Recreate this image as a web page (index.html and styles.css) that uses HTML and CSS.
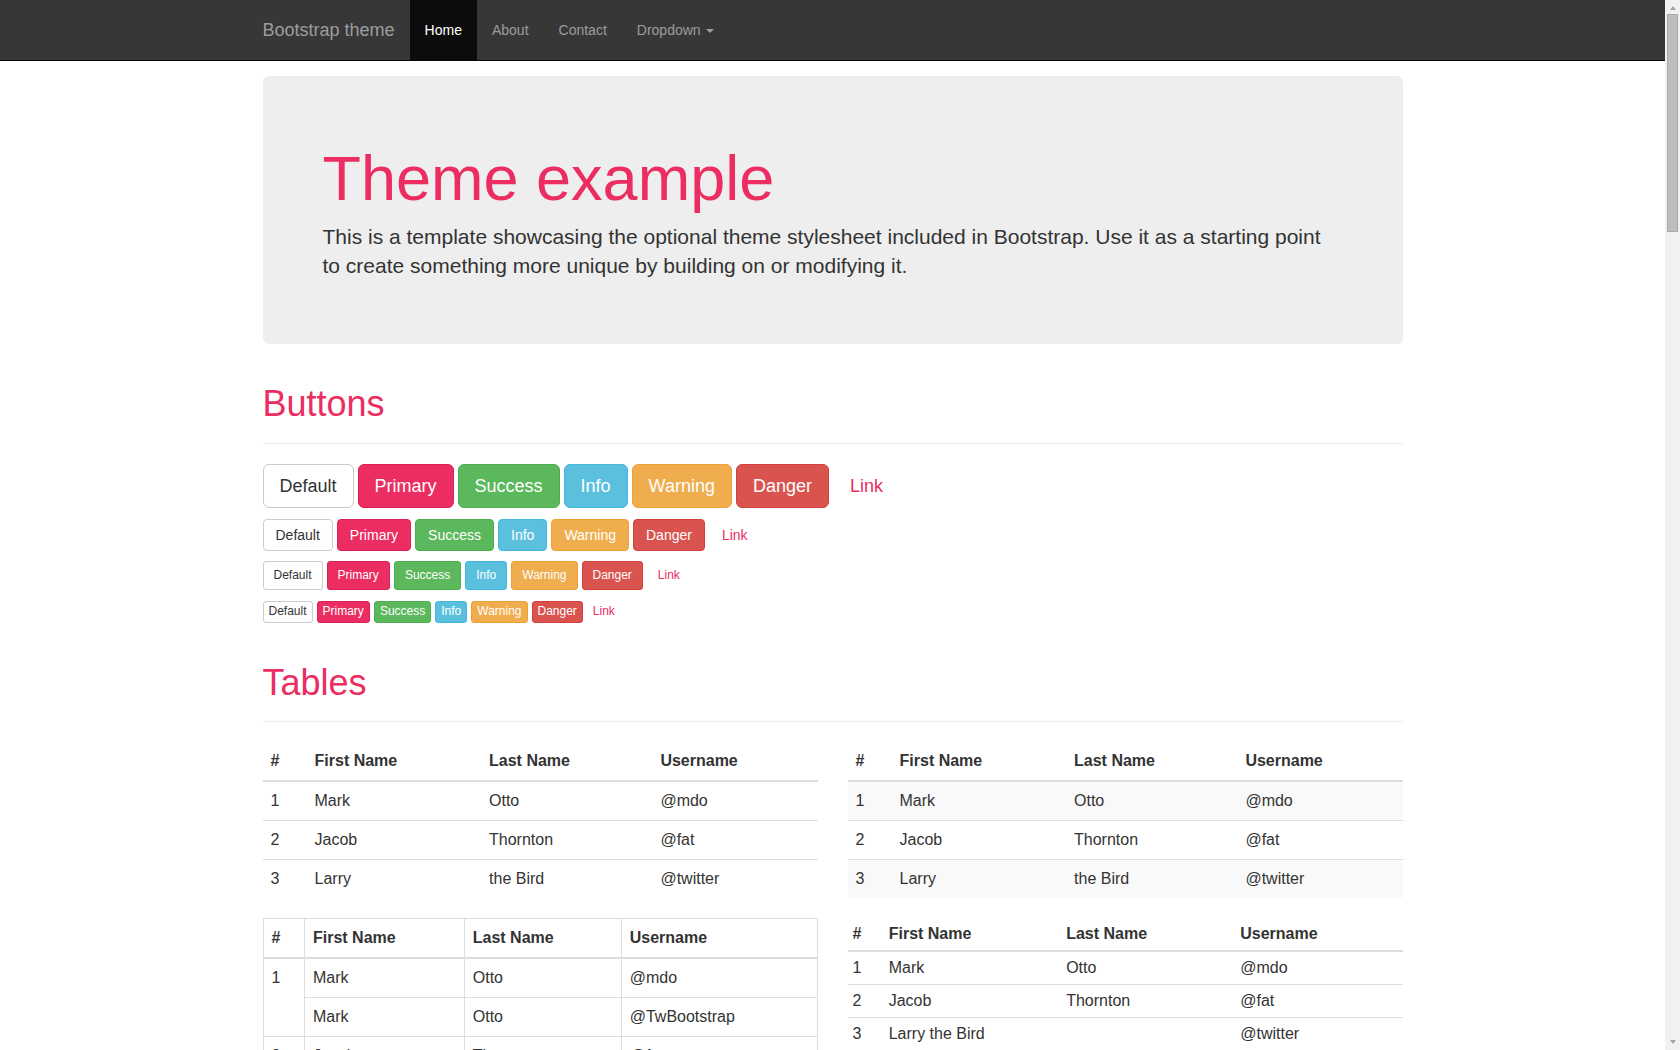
FILE: index.html
```html
<!DOCTYPE html>
<html lang="en">
<head>
<meta charset="utf-8">
<title>Theme Template for Bootstrap</title>
<link rel="stylesheet" href="styles.css">
</head>
<body>
<div class="page">
<nav class="navbar">
  <div class="container navbar-inner">
    <a class="brand" href="#">Bootstrap theme</a>
    <ul class="nav">
      <li><a class="active" href="#">Home</a></li>
      <li><a href="#about">About</a></li>
      <li><a href="#contact">Contact</a></li>
      <li><a href="#">Dropdown <span class="caret"></span></a></li>
    </ul>
  </div>
</nav>

<main class="container showcase">
  <div class="jumbotron">
    <h1>Theme example</h1>
    <p>This is a template showcasing the optional theme stylesheet included in Bootstrap. Use it as a starting point to create something more unique by building on or modifying it.</p>
  </div>

  <div class="page-header"><h1>Buttons</h1></div>
  <div class="btn-row row-lg">
    <button type="button" class="btn btn-lg btn-default">Default</button>
    <button type="button" class="btn btn-lg btn-primary">Primary</button>
    <button type="button" class="btn btn-lg btn-success">Success</button>
    <button type="button" class="btn btn-lg btn-info">Info</button>
    <button type="button" class="btn btn-lg btn-warning">Warning</button>
    <button type="button" class="btn btn-lg btn-danger">Danger</button>
    <button type="button" class="btn btn-lg btn-link">Link</button>
  </div>
  <div class="btn-row row-md">
    <button type="button" class="btn btn-default">Default</button>
    <button type="button" class="btn btn-primary">Primary</button>
    <button type="button" class="btn btn-success">Success</button>
    <button type="button" class="btn btn-info">Info</button>
    <button type="button" class="btn btn-warning">Warning</button>
    <button type="button" class="btn btn-danger">Danger</button>
    <button type="button" class="btn btn-link">Link</button>
  </div>
  <div class="btn-row row-sm">
    <button type="button" class="btn btn-sm btn-default">Default</button>
    <button type="button" class="btn btn-sm btn-primary">Primary</button>
    <button type="button" class="btn btn-sm btn-success">Success</button>
    <button type="button" class="btn btn-sm btn-info">Info</button>
    <button type="button" class="btn btn-sm btn-warning">Warning</button>
    <button type="button" class="btn btn-sm btn-danger">Danger</button>
    <button type="button" class="btn btn-sm btn-link">Link</button>
  </div>
  <div class="btn-row row-xs">
    <button type="button" class="btn btn-xs btn-default">Default</button>
    <button type="button" class="btn btn-xs btn-primary">Primary</button>
    <button type="button" class="btn btn-xs btn-success">Success</button>
    <button type="button" class="btn btn-xs btn-info">Info</button>
    <button type="button" class="btn btn-xs btn-warning">Warning</button>
    <button type="button" class="btn btn-xs btn-danger">Danger</button>
    <button type="button" class="btn btn-xs btn-link">Link</button>
  </div>

  <div class="page-header"><h1>Tables</h1></div>
  <div class="table-grid">
    <table class="table">
      <thead><tr><th>#</th><th>First Name</th><th>Last Name</th><th>Username</th></tr></thead>
      <tbody>
        <tr><td>1</td><td>Mark</td><td>Otto</td><td>@mdo</td></tr>
        <tr><td>2</td><td>Jacob</td><td>Thornton</td><td>@fat</td></tr>
        <tr><td>3</td><td>Larry</td><td>the Bird</td><td>@twitter</td></tr>
      </tbody>
    </table>
    <table class="table table-striped">
      <thead><tr><th>#</th><th>First Name</th><th>Last Name</th><th>Username</th></tr></thead>
      <tbody>
        <tr><td>1</td><td>Mark</td><td>Otto</td><td>@mdo</td></tr>
        <tr><td>2</td><td>Jacob</td><td>Thornton</td><td>@fat</td></tr>
        <tr><td>3</td><td>Larry</td><td>the Bird</td><td>@twitter</td></tr>
      </tbody>
    </table>
  </div>
  <div class="table-grid">
    <table class="table table-bordered">
      <thead><tr><th>#</th><th>First Name</th><th>Last Name</th><th>Username</th></tr></thead>
      <tbody>
        <tr><td rowspan="2">1</td><td>Mark</td><td>Otto</td><td>@mdo</td></tr>
        <tr><td>Mark</td><td>Otto</td><td>@TwBootstrap</td></tr>
        <tr><td>2</td><td>Jacob</td><td>Thornton</td><td>@fat</td></tr>
        <tr><td>3</td><td colspan="2">Larry the Bird</td><td>@twitter</td></tr>
      </tbody>
    </table>
    <table class="table table-condensed">
      <thead><tr><th>#</th><th>First Name</th><th>Last Name</th><th>Username</th></tr></thead>
      <tbody>
        <tr><td>1</td><td>Mark</td><td>Otto</td><td>@mdo</td></tr>
        <tr><td>2</td><td>Jacob</td><td>Thornton</td><td>@fat</td></tr>
        <tr><td>3</td><td colspan="2">Larry the Bird</td><td>@twitter</td></tr>
      </tbody>
    </table>
  </div>

  <div class="page-header"><h1>Thumbnails</h1></div>
  <div class="thumbnail"><div class="thumb-img">200x200</div></div>

  <div class="page-header"><h1>Labels</h1></div>
  <h1 class="h-demo h-1">Example heading <span class="label label-default">New</span></h1>
  <h2 class="h-demo h-2">Example heading <span class="label label-default">New</span></h2>
  <h3 class="h-demo h-3">Example heading <span class="label label-default">New</span></h3>
  <h4 class="h-demo h-4">Example heading <span class="label label-default">New</span></h4>
  <h5 class="h-demo h-5">Example heading <span class="label label-default">New</span></h5>
  <h6 class="h-demo h-6">Example heading <span class="label label-default">New</span></h6>
  <p class="label-line">
    <span class="label label-default">Default</span>
    <span class="label label-primary">Primary</span>
    <span class="label label-success">Success</span>
    <span class="label label-info">Info</span>
    <span class="label label-warning">Warning</span>
    <span class="label label-danger">Danger</span>
  </p>

  <div class="page-header"><h1>Badges</h1></div>
  <p><a href="#">Inbox <span class="badge">42</span></a></p>
  <ul class="pills">
    <li><a class="pill pill-active" href="#">Home <span class="badge badge-light">42</span></a></li>
    <li><a class="pill" href="#">Profile</a></li>
    <li><a class="pill" href="#">Messages <span class="badge">3</span></a></li>
  </ul>

  <div class="page-header"><h1>Dropdown menus</h1></div>
  <ul class="dropdown-menu">
    <li><a href="#">Action</a></li>
    <li><a href="#">Another action</a></li>
    <li><a href="#">Something else here</a></li>
    <li class="divider"></li>
    <li><a href="#">Separated link</a></li>
  </ul>

  <div class="page-header"><h1>Navs</h1></div>
  <ul class="tabs">
    <li><a class="tab tab-active" href="#">Home</a></li>
    <li><a class="tab" href="#">Profile</a></li>
    <li><a class="tab" href="#">Messages</a></li>
  </ul>
  <ul class="pills">
    <li><a class="pill pill-active" href="#">Home</a></li>
    <li><a class="pill" href="#">Profile</a></li>
    <li><a class="pill" href="#">Messages</a></li>
  </ul>

  <div class="page-header"><h1>Navbars</h1></div>
  <div class="demo-navbar demo-navbar-light">
    <span class="demo-brand">Project name</span>
    <a class="demo-link demo-link-active" href="#">Home</a>
    <a class="demo-link" href="#about">About</a>
    <a class="demo-link" href="#contact">Contact</a>
  </div>
  <div class="demo-navbar demo-navbar-dark">
    <span class="demo-brand">Project name</span>
    <a class="demo-link demo-link-active" href="#">Home</a>
    <a class="demo-link" href="#about">About</a>
    <a class="demo-link" href="#contact">Contact</a>
  </div>

  <div class="page-header"><h1>Alerts</h1></div>
  <div class="alert alert-success"><strong>Well done!</strong> You successfully read this important alert message.</div>
  <div class="alert alert-info"><strong>Heads up!</strong> This alert needs your attention, but it's not super important.</div>
  <div class="alert alert-warning"><strong>Warning!</strong> Best check yo self, you're not looking too good.</div>
  <div class="alert alert-danger"><strong>Oh snap!</strong> Change a few things up and try submitting again.</div>

  <div class="page-header"><h1>Progress bars</h1></div>
  <div class="progress"><div class="bar bar-primary" style="width: 60%">60% Complete</div></div>
  <div class="progress"><div class="bar bar-success" style="width: 40%">40% Complete (success)</div></div>
  <div class="progress"><div class="bar bar-info" style="width: 20%">20% Complete</div></div>
  <div class="progress"><div class="bar bar-warning" style="width: 60%">60% Complete (warning)</div></div>
  <div class="progress"><div class="bar bar-danger" style="width: 80%">80% Complete (danger)</div></div>

  <div class="page-header"><h1>List groups</h1></div>
  <div class="three-cols">
    <ul class="list-group">
      <li>Cras justo odio</li><li>Dapibus ac facilisis in</li><li>Morbi leo risus</li><li>Porta ac consectetur ac</li><li>Vestibulum at eros</li>
    </ul>
    <ul class="list-group">
      <li class="list-active">Cras justo odio</li><li>Dapibus ac facilisis in</li><li>Morbi leo risus</li><li>Porta ac consectetur ac</li><li>Vestibulum at eros</li>
    </ul>
    <ul class="list-group">
      <li class="list-active"><strong>List group item heading</strong><br>Donec id elit non mi porta gravida at eget metus. Maecenas sed diam eget risus varius blandit.</li>
      <li><strong>List group item heading</strong><br>Donec id elit non mi porta gravida at eget metus. Maecenas sed diam eget risus varius blandit.</li>
    </ul>
  </div>

  <div class="page-header"><h1>Panels</h1></div>
  <div class="three-cols">
    <div>
      <div class="panel"><div class="panel-heading">Panel title</div><div class="panel-body">Panel content</div></div>
      <div class="panel panel-primary"><div class="panel-heading">Panel title</div><div class="panel-body">Panel content</div></div>
    </div>
    <div>
      <div class="panel panel-success"><div class="panel-heading">Panel title</div><div class="panel-body">Panel content</div></div>
      <div class="panel panel-info"><div class="panel-heading">Panel title</div><div class="panel-body">Panel content</div></div>
    </div>
    <div>
      <div class="panel panel-warning"><div class="panel-heading">Panel title</div><div class="panel-body">Panel content</div></div>
      <div class="panel panel-danger"><div class="panel-heading">Panel title</div><div class="panel-body">Panel content</div></div>
    </div>
  </div>

  <div class="page-header"><h1>Wells</h1></div>
  <div class="well">
    <p>Sed ut perspiciatis unde omnis iste natus error sit voluptatem accusantium doloremque laudantium, totam rem aperiam, eaque ipsa quae ab illo inventore veritatis et quasi architecto beatae vitae dicta sunt explicabo.</p>
  </div>
</main>
</div>

<aside class="scrollbar" aria-hidden="true">
  <span class="sb-arrow sb-up"></span>
  <span class="sb-thumb"></span>
  <span class="sb-arrow sb-down"></span>
</aside>
</body>
</html>
```

FILE: styles.css
```css
* {
  box-sizing: border-box;
}

html {
  font-size: 16px;
}

body {
  margin: 0;
  display: flex;
  align-items: flex-start;
  font-family: "Liberation Sans", Arial, sans-serif;
  font-size: 16px;
  line-height: 1.375;
  color: #333;
  background: #fff;
}

a {
  color: #eb2d61;
  text-decoration: none;
}

.page {
  flex: 1 1 auto;
  min-width: 0;
}

/* Window scrollbar */
.scrollbar {
  flex: 0 0 15px;
  position: sticky;
  top: 0;
  height: 100vh;
  display: flex;
  flex-direction: column;
  align-items: center;
  padding: 6px 0;
  background: #f1f1f1;
}

.sb-arrow {
  width: 0;
  height: 0;
  border-left: 3.5px solid transparent;
  border-right: 3.5px solid transparent;
}

.sb-up {
  border-bottom: 4px solid #a3a3a3;
}

.sb-down {
  margin-top: auto;
  border-top: 4px solid #a3a3a3;
}

.sb-thumb {
  width: 11px;
  height: 218px;
  margin-top: 4px;
  background: #bdbdbd;
  border: 1px solid #a9a9a9;
}

.container {
  width: 1170px;
  margin: 0 auto;
  padding: 0 15px;
}

/* Navbar */
.navbar {
  background: #373737;
  border-bottom: 1px solid #080808;
  height: 61px;
}

.navbar-inner {
  display: flex;
  height: 60px;
}

.brand {
  margin-left: -15px;
  padding: 20px 15px;
  font-size: 18px;
  line-height: 20px;
  color: #9d9d9d;
}

.nav {
  display: flex;
  list-style: none;
  margin: 0;
  padding: 0;
}

.nav a {
  display: block;
  padding: 20px 15px;
  font-size: 14px;
  line-height: 20px;
  color: #9d9d9d;
}

.nav a.active {
  color: #fff;
  background: #0c0c0c;
}

.caret {
  display: inline-block;
  width: 0;
  height: 0;
  margin-left: 2px;
  vertical-align: middle;
  border-top: 4px solid #9d9d9d;
  border-left: 4px solid transparent;
  border-right: 4px solid transparent;
}

/* Jumbotron */
.showcase {
  padding-bottom: 30px;
}

.jumbotron {
  margin: 15px 0 30px;
  padding: 48px 60px;
  background: #eee;
  border-radius: 6px;
}

.jumbotron h1 {
  margin: 20px 0 10px;
  font-size: 63px;
  line-height: 1.1;
  font-weight: normal;
  color: #eb2d61;
}

.jumbotron p {
  margin: 0 0 15px;
  font-size: 21px;
  line-height: 1.375;
}

/* Page headers */
.page-header {
  margin: 40px 0 20px;
  padding-bottom: 9px;
  border-bottom: 1px solid #eee;
}

.page-header h1 {
  margin: 20px 0 10px;
  font-size: 36px;
  line-height: 1.1;
  font-weight: normal;
  color: #eb2d61;
}

/* Buttons */
.btn-row {
  display: flex;
  align-items: center;
  gap: 4px;
}

.row-lg { margin-bottom: 11px; }
.row-md { margin-bottom: 10px; }
.row-sm { margin-bottom: 11px; }
.row-xs { margin-bottom: 10px; }

.btn {
  display: inline-block;
  margin: 0;
  padding: 6px 12px;
  font-family: inherit;
  font-size: 14px;
  line-height: 18px;
  font-weight: normal;
  text-align: center;
  white-space: nowrap;
  border: 1px solid transparent;
  border-radius: 4px;
  cursor: pointer;
  background: #fff;
}

.btn-lg {
  padding: 10px 16px;
  font-size: 18px;
  line-height: 22px;
  border-radius: 6px;
}

.btn-sm {
  padding: 5px 10px;
  font-size: 12px;
  line-height: 17.5px;
  border-radius: 3px;
}

.btn-xs {
  padding: 1px 5px;
  font-size: 12px;
  line-height: 17.5px;
  border-radius: 3px;
}

.btn-default {
  color: #333;
  background: #fff;
  border-color: #ccc;
}

.btn-primary {
  color: #fff;
  background: #eb2d61;
  border-color: #dc2156;
}

.btn-success {
  color: #fff;
  background: #5cb85c;
  border-color: #4cae4c;
}

.btn-info {
  color: #fff;
  background: #5bc0de;
  border-color: #46b8da;
}

.btn-warning {
  color: #fff;
  background: #f0ad4e;
  border-color: #eea236;
}

.btn-danger {
  color: #fff;
  background: #d9534f;
  border-color: #d43f3a;
}

.btn-link {
  color: #eb2d61;
  background: transparent;
  border-color: transparent;
}

/* Tables */
.table-grid {
  display: grid;
  grid-template-columns: 1fr 1fr;
  column-gap: 30px;
  align-items: start;
}

.table {
  width: 100%;
  border-collapse: collapse;
  border-spacing: 0;
  margin-bottom: 20px;
}

.table th,
.table td {
  padding: 8px;
  line-height: 22px;
  text-align: left;
  vertical-align: top;
  border-top: 1px solid #ddd;
}

.table thead th {
  border-top: 0;
  border-bottom: 2px solid #ddd;
  vertical-align: bottom;
  font-weight: bold;
}

.table-striped tbody tr:nth-child(odd) {
  background: #f9f9f9;
}

.table-bordered {
  border: 1px solid #ddd;
}

.table-bordered th,
.table-bordered td {
  border: 1px solid #ddd;
}

.table-bordered thead th {
  border-bottom-width: 2px;
}

.table-condensed th,
.table-condensed td {
  padding: 5px;
}

/* Thumbnails */
.thumbnail {
  display: inline-block;
  padding: 4px;
  border: 1px solid #ddd;
  border-radius: 4px;
  margin-bottom: 20px;
}

.thumb-img {
  width: 200px;
  height: 200px;
  display: flex;
  align-items: center;
  justify-content: center;
  background: #eee;
  color: #aaa;
  font-size: 14px;
  font-weight: bold;
}

/* Labels */
.h-demo {
  margin: 20px 0 10px;
  font-weight: normal;
  line-height: 1.1;
}

.h-1 { font-size: 36px; }
.h-2 { font-size: 30px; }
.h-3 { font-size: 24px; }
.h-4 { font-size: 18px; margin-top: 10px; }
.h-5 { font-size: 14px; margin-top: 10px; }
.h-6 { font-size: 12px; margin-top: 10px; }

.label {
  display: inline-block;
  padding: 0.2em 0.6em 0.3em;
  font-size: 75%;
  font-weight: bold;
  line-height: 1;
  color: #fff;
  border-radius: 0.25em;
  vertical-align: baseline;
}

.label-default { background: #777; }
.label-primary { background: #eb2d61; }
.label-success { background: #5cb85c; }
.label-info { background: #5bc0de; }
.label-warning { background: #f0ad4e; }
.label-danger { background: #d9534f; }

.label-line {
  margin: 0 0 10px;
}

/* Badges */
.badge {
  display: inline-block;
  min-width: 10px;
  padding: 3px 7px;
  font-size: 12px;
  font-weight: bold;
  line-height: 1;
  color: #fff;
  background: #777;
  border-radius: 10px;
}

.badge-light {
  color: #eb2d61;
  background: #fff;
}

.pills {
  display: flex;
  gap: 2px;
  list-style: none;
  margin: 0 0 20px;
  padding: 0;
}

.pill {
  display: block;
  padding: 10px 15px;
  border-radius: 4px;
  font-size: 14px;
}

.pill-active {
  color: #fff;
  background: #eb2d61;
}

/* Dropdown */
.dropdown-menu {
  width: 180px;
  list-style: none;
  margin: 0 0 20px;
  padding: 5px 0;
  background: #fff;
  border: 1px solid rgba(0, 0, 0, 0.15);
  border-radius: 4px;
  box-shadow: 0 6px 12px rgba(0, 0, 0, 0.175);
  font-size: 14px;
}

.dropdown-menu a {
  display: block;
  padding: 3px 20px;
  color: #333;
}

.dropdown-menu .divider {
  height: 1px;
  margin: 9px 0;
  background: #e5e5e5;
}

/* Navs */
.tabs {
  display: flex;
  list-style: none;
  margin: 0 0 20px;
  padding: 0;
  border-bottom: 1px solid #ddd;
}

.tab {
  display: block;
  margin-bottom: -1px;
  padding: 10px 15px;
  font-size: 14px;
  border: 1px solid transparent;
  border-radius: 4px 4px 0 0;
}

.tab-active {
  color: #555;
  border-color: #ddd #ddd transparent;
  background: #fff;
}

/* Navbars demo */
.demo-navbar {
  display: flex;
  align-items: center;
  height: 52px;
  margin-bottom: 20px;
  border-radius: 4px;
  border: 1px solid #e7e7e7;
  font-size: 14px;
}

.demo-navbar-light {
  background: #f8f8f8;
}

.demo-navbar-dark {
  background: #373737;
  border-color: #080808;
}

.demo-brand {
  padding: 0 15px;
  font-size: 18px;
  color: #777;
}

.demo-link {
  padding: 15px;
  color: #777;
}

.demo-navbar-dark .demo-link,
.demo-navbar-dark .demo-brand {
  color: #9d9d9d;
}

.demo-link-active {
  color: #555;
  background: #e7e7e7;
}

.demo-navbar-dark .demo-link-active {
  color: #fff;
  background: #0c0c0c;
}

/* Alerts */
.alert {
  padding: 15px;
  margin-bottom: 20px;
  border: 1px solid transparent;
  border-radius: 4px;
  font-size: 14px;
}

.alert-success { color: #3c763d; background: #dff0d8; border-color: #d6e9c6; }
.alert-info { color: #31708f; background: #d9edf7; border-color: #bce8f1; }
.alert-warning { color: #8a6d3b; background: #fcf8e3; border-color: #faebcc; }
.alert-danger { color: #a94442; background: #f2dede; border-color: #ebccd1; }

/* Progress */
.progress {
  display: flex;
  height: 20px;
  margin-bottom: 20px;
  overflow: hidden;
  background: #f5f5f5;
  border-radius: 4px;
  box-shadow: inset 0 1px 2px rgba(0, 0, 0, 0.1);
}

.bar {
  height: 100%;
  font-size: 12px;
  line-height: 20px;
  color: #fff;
  text-align: center;
  white-space: nowrap;
}

.bar-primary { background: #eb2d61; }
.bar-success { background: #5cb85c; }
.bar-info { background: #5bc0de; }
.bar-warning { background: #f0ad4e; }
.bar-danger { background: #d9534f; }

/* List groups & panels */
.three-cols {
  display: grid;
  grid-template-columns: repeat(3, 1fr);
  column-gap: 30px;
  align-items: start;
}

.list-group {
  list-style: none;
  margin: 0 0 20px;
  padding: 0;
  font-size: 14px;
}

.list-group li {
  padding: 10px 15px;
  margin-bottom: -1px;
  border: 1px solid #ddd;
  background: #fff;
}

.list-group li:first-child {
  border-radius: 4px 4px 0 0;
}

.list-group li:last-child {
  border-radius: 0 0 4px 4px;
}

.list-group .list-active {
  color: #fff;
  background: #eb2d61;
  border-color: #eb2d61;
}

.panel {
  margin-bottom: 20px;
  border: 1px solid #ddd;
  border-radius: 4px;
  font-size: 14px;
}

.panel-heading {
  padding: 10px 15px;
  font-size: 16px;
  color: #333;
  background: #f5f5f5;
  border-bottom: 1px solid #ddd;
  border-radius: 3px 3px 0 0;
}

.panel-body {
  padding: 15px;
}

.panel-primary { border-color: #eb2d61; }
.panel-primary .panel-heading { color: #fff; background: #eb2d61; border-color: #eb2d61; }
.panel-success { border-color: #d6e9c6; }
.panel-success .panel-heading { color: #3c763d; background: #dff0d8; border-color: #d6e9c6; }
.panel-info { border-color: #bce8f1; }
.panel-info .panel-heading { color: #31708f; background: #d9edf7; border-color: #bce8f1; }
.panel-warning { border-color: #faebcc; }
.panel-warning .panel-heading { color: #8a6d3b; background: #fcf8e3; border-color: #faebcc; }
.panel-danger { border-color: #ebccd1; }
.panel-danger .panel-heading { color: #a94442; background: #f2dede; border-color: #ebccd1; }

/* Wells */
.well {
  padding: 19px;
  margin-bottom: 20px;
  background: #f5f5f5;
  border: 1px solid #e3e3e3;
  border-radius: 4px;
}

.well p {
  margin: 0;
}
```
